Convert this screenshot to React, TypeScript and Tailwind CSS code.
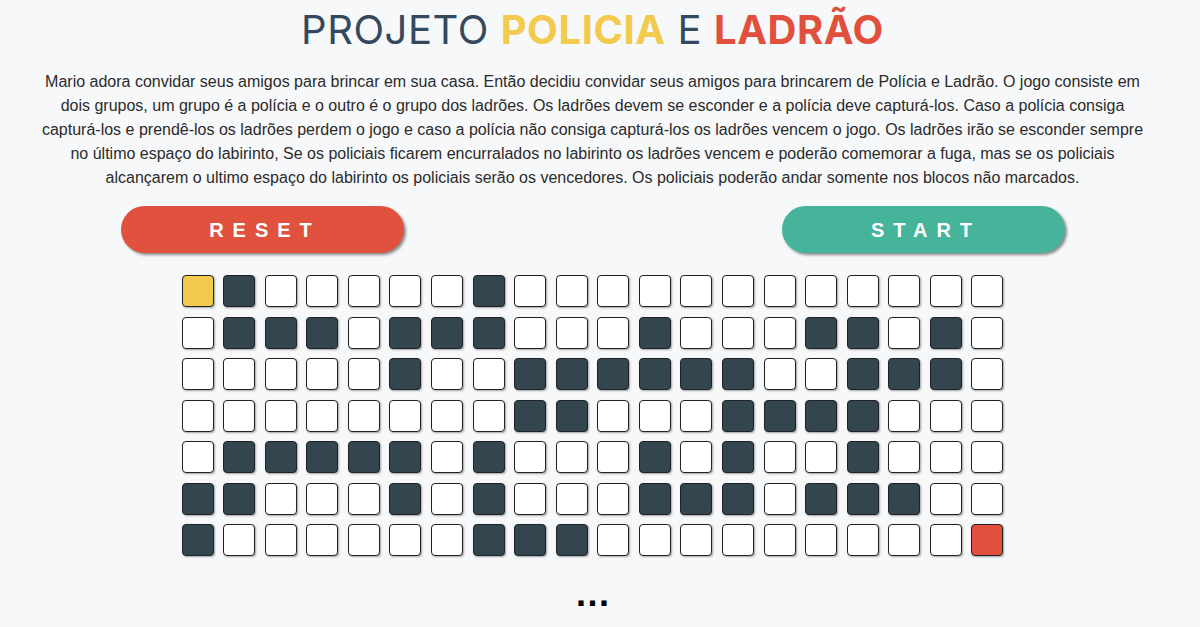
const MAZE = [
  'Y#.....#............',
  '.###.###...#...##.#.',
  '.....#..######..###.',
  '........##...####...',
  '.#####.#...#.#..#...',
  '##...#.#...###.###..',
  '#......###.........R',
]

function Cell({ kind }: { kind: string }) {
  const color =
    kind === '#'
      ? 'bg-[#33454f]'
      : kind === 'Y'
        ? 'bg-[#f2ca4d]'
        : kind === 'R'
          ? 'bg-[#e0503c]'
          : 'bg-white'
  return (
    <div
      className={`w-[32px] h-[32px] rounded-[4px] border border-[#1f2326] shadow-[1px_1px_2px_rgba(0,0,0,0.35)] ${color}`}
    />
  )
}

export default function App() {
  return (
    <div className="min-h-[627px] bg-[#f7f8fa] font-['Liberation_Sans',Arial,sans-serif] overflow-hidden">
      {/* content column leaves room for the page scrollbar */}
      <div className="w-[1185px]">
        {/* Title */}
        <h1 className="pt-[6px] text-center text-[40px] leading-[48px] tracking-[0.55px] font-['Inter',sans-serif] text-[#34495e]">
          PROJETO <span className="font-bold text-[#f2ca4d]">POLICIA</span> E{' '}
          <span className="font-bold text-[#e0503c]">LADRÃO</span>
        </h1>

        {/* Description */}
        <p className="mt-[16px] px-[32px] text-center text-[16px] leading-[24px] text-[#2b2b2b]">
          Mario adora convidar seus amigos para brincar em sua casa. Então decidiu convidar seus amigos para brincarem
          de Polícia e Ladrão. O jogo consiste em dois grupos, um grupo é a polícia e o outro é o grupo dos ladrões. Os
          ladrões devem se esconder e a polícia deve capturá-los. Caso a polícia consiga capturá-los e prendê-los os
          ladrões perdem o jogo e caso a polícia não consiga capturá-los os ladrões vencem o jogo. Os ladrões irão se
          esconder sempre no último espaço do labirinto, Se os policiais ficarem encurralados no labirinto os ladrões
          vencem e poderão comemorar a fuga, mas se os policiais alcançarem o ultimo espaço do labirinto os policiais
          serão os vencedores. Os policiais poderão andar somente nos blocos não marcados.
        </p>

        {/* Buttons */}
        <div className="mt-[16px] mx-auto w-[944px] flex justify-between">
          <button className="w-[283px] h-[47px] rounded-full bg-[#e0523e] text-white font-bold text-[20px] tracking-[0.45em] pl-[0.3em] pt-[1px] shadow-[2px_2px_3px_rgba(0,0,0,0.45)]">
            RESET
          </button>
          <button className="w-[283px] h-[47px] rounded-full bg-[#46b39b] text-white font-bold text-[20px] tracking-[0.45em] pl-[0.3em] pt-[1px] shadow-[2px_2px_3px_rgba(0,0,0,0.45)]">
            START
          </button>
        </div>

        {/* Maze */}
        <div className="mt-[22px] mx-auto grid grid-cols-[repeat(20,32px)] gap-x-[9.58px] gap-y-[9.5px] w-max">
          {MAZE.map((row, r) =>
            row.split('').map((kind, c) => <Cell key={`${r}-${c}`} kind={kind} />),
          )}
        </div>

        <div className="mt-[20px] pl-[1.5px] text-center text-[36px] font-bold leading-[36px] tracking-[1.5px] text-black">
          ...
        </div>
      </div>
    </div>
  )
}
